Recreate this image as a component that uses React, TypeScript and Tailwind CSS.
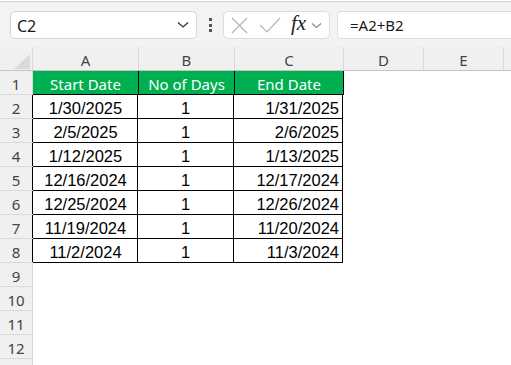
import React from "react";

const rows: [string, string, string][] = [
  ["1/30/2025", "1", "1/31/2025"],
  ["2/5/2025", "1", "2/6/2025"],
  ["1/12/2025", "1", "1/13/2025"],
  ["12/16/2024", "1", "12/17/2024"],
  ["12/25/2024", "1", "12/26/2024"],
  ["11/19/2024", "1", "11/20/2024"],
  ["11/2/2024", "1", "11/3/2024"],
];

const ui = { fontFamily: '"Noto Sans", "Open Sans", sans-serif' };
const arial = { fontFamily: '"Liberation Sans", Arial, sans-serif' };

function RowHead({ n }: { n?: number }) {
  return (
    <div
      className="h-[24px] w-[33px] shrink-0 bg-[#f0f0f0] border-b border-r border-[#d9d9d9] flex items-center justify-center pt-[3px] text-[15px] text-[#444]"
      style={ui}
    >
      {n}
    </div>
  );
}

export default function App() {
  return (
    <div className="w-[511px] h-[365px] overflow-hidden bg-white relative">
      {/* top strip */}
      <div className="h-[2px] bg-white border-b border-[#cfcfcf] shadow-[0_1px_2px_rgba(0,0,0,0.12)]" />
      {/* formula bar */}
      <div className="h-[45px] bg-[#f3f3f3] flex items-start pt-[9px] pl-[10px]">
        <div className="w-[187px] h-[28px] bg-white rounded-[5px] border border-[#d6d6d6] flex items-center justify-between pl-[6px] pr-[7px]">
          <span className="text-[16px] text-[#1a1a1a] pt-[1px]" style={ui}>C2</span>
          <svg width="12" height="8" viewBox="0 0 12 8">
            <polyline points="1,1.5 6,6 11,1.5" fill="none" stroke="#333" strokeWidth="1.3" />
          </svg>
        </div>
        <div className="w-[26px] h-[28px] flex flex-col items-center justify-center gap-[2.5px]">
          <div className="w-[3px] h-[3px] bg-[#555]" />
          <div className="w-[3px] h-[3px] bg-[#555]" />
          <div className="w-[3px] h-[3px] bg-[#555]" />
        </div>
        <div className="w-[107px] h-[28px] bg-white rounded-[5px] border border-[#dcdcdc] flex items-center pl-[7px]">
          <svg width="17" height="17" viewBox="0 0 17 17">
            <line x1="1" y1="1" x2="16" y2="16" stroke="#b5b5b5" strokeWidth="1.2" />
            <line x1="16" y1="1" x2="1" y2="16" stroke="#b5b5b5" strokeWidth="1.2" />
          </svg>
          <svg width="22" height="16" viewBox="0 0 22 16" className="ml-[11px]">
            <polyline points="1,8 8,15 21,1" fill="none" stroke="#b5b5b5" strokeWidth="1.2" />
          </svg>
          <span
            className="ml-[10px] text-[21px] italic text-[#222] leading-none -mt-[3px]"
            style={{ fontFamily: '"Liberation Serif", "DejaVu Serif", serif' }}
          >
            fx
          </span>
          <svg width="11" height="7" viewBox="0 0 11 7" className="ml-[5px]">
            <polyline points="1,1.5 5.5,5.5 10,1.5" fill="none" stroke="#888" strokeWidth="1.1" />
          </svg>
        </div>
        <div className="ml-[7px] flex-1 h-[28px] bg-white rounded-l-[5px] border border-r-0 border-[#dcdcdc] flex items-center pl-[12px]">
          <span className="text-[15px] text-[#1a1a1a] pt-[1px]" style={ui}>=A2+B2</span>
        </div>
      </div>
      {/* column headers */}
      <div className="flex h-[24px] bg-[#f0f0f0] border-b border-[#c4c4c4]">
        <div className="w-[33px] shrink-0 border-r border-[#d9d9d9] relative">
          <svg width="33" height="23" viewBox="0 0 33 23" className="absolute left-0 top-0">
            <polygon points="14,22 30,22 30,7" fill="#dadada" />
          </svg>
        </div>
        {[
          ["A", 106],
          ["B", 96],
          ["C", 109],
          ["D", 80],
          ["E", 80],
        ].map(([l, w]) => (
          <div
            key={l as string}
            className="shrink-0 border-r border-[#d9d9d9] flex items-center justify-center pt-[3px] text-[15px] text-[#444]"
            style={{ width: w as number, ...ui }}
          >
            {l}
          </div>
        ))}
        <div className="flex-1" />
      </div>
      {/* row 1 */}
      <div className="flex">
        <RowHead n={1} />
        <div className="flex h-[24px] bg-[#00b050] border-b border-black text-white text-[15px]" style={ui}>
          <div className="w-[106px] border-r border-black flex items-center justify-center pt-[3px]">Start Date</div>
          <div className="w-[96px] border-r border-black flex items-center justify-center pt-[3px]">No of Days</div>
          <div className="w-[109px] border-r border-black flex items-center justify-center pt-[3px]">End Date</div>
        </div>
      </div>
      {rows.map((r, i) => (
        <div className="flex" key={i}>
          <RowHead n={i + 2} />
          <div className="flex h-[24px] border-b border-black text-[16.5px] text-black" style={arial}>
            <div className="w-[106px] border-l border-r border-black -ml-px pl-px flex items-center justify-center pt-[3px]">{r[0]}</div>
            <div className="w-[96px] border-r border-black flex items-center justify-center pt-[3px]">{r[1]}</div>
            <div className="w-[109px] border-r border-black flex items-center justify-end pr-[3px] pt-[3px]">{r[2]}</div>
          </div>
        </div>
      ))}
      {[9, 10, 11, 12].map((n) => (
        <div className="flex" key={n}>
          <RowHead n={n} />
        </div>
      ))}
      <div className="flex">
        <RowHead />
      </div>
    </div>
  );
}
